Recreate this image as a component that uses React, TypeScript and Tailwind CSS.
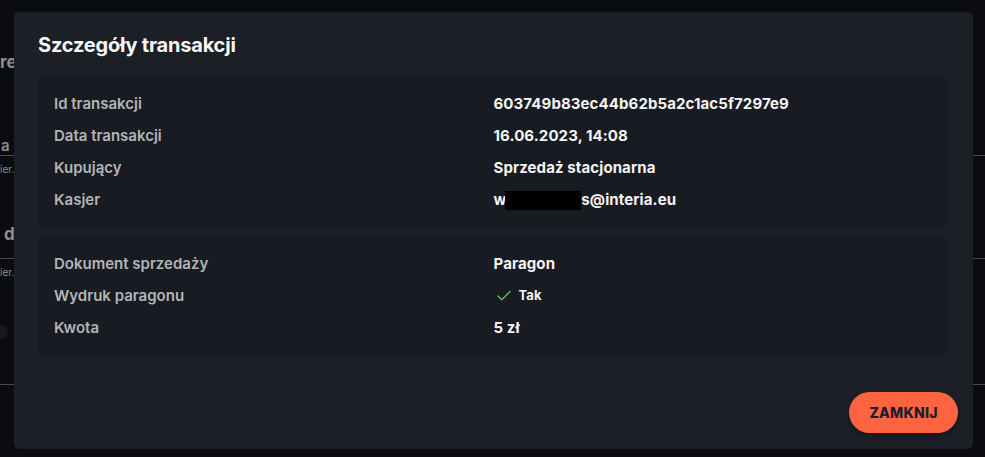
import React from "react";

const rows1 = [
  ["Id transakcji", "603749b83ec44b62b5a2c1ac5f7297e9"],
  ["Data transakcji", "16.06.2023, 14:08"],
  ["Kupujący", "Sprzedaż stacjonarna"],
];

function Row({ label, children }: { label: string; children: React.ReactNode }) {
  return (
    <div className="grid grid-cols-2 h-[32px] items-center">
      <div className="text-[15px] font-semibold text-[#b3b4b7]">{label}</div>
      <div className="text-[15px] font-bold text-[#f4f4f5] tracking-[0.1px] flex items-center">{children}</div>
    </div>
  );
}

export default function App() {
  return (
    <div
      className="relative w-[985px] h-[457px] overflow-hidden bg-[#0b0c0f]"
      style={{ fontFamily: "Inter, 'Noto Sans', sans-serif" }}
    >
      {/* background page */}
      <div className="flex flex-col text-[#8d8e91]">
        <div className="h-[52px]" />
        <div className="h-[20px] text-[17px] font-bold leading-[20px]">re</div>
        <div className="h-[64px]" />
        <div className="h-[19px] pl-[1px] text-[15px] font-semibold leading-[19px]">a</div>
        <div className="h-[1px] bg-[#4a4b4f]" />
        <div className="h-[14px] pt-[8px] text-[10px] leading-[10px]">ier.</div>
        <div className="h-[54px]" />
        <div className="h-[20px] pl-[4px] text-[17px] font-bold leading-[20px]">d</div>
        <div className="h-[1px] bg-[#4a4b4f] mt-[14px]" />
        <div className="h-[14px] pt-[8px] text-[10px] leading-[10px]">ier.</div>
        <div className="h-[52px]" />
        <div className="h-[14px] w-[8px] rounded-r-full bg-[#17181b]" />
        <div className="h-[45px]" />
        <div className="h-[1px] bg-[#4a4b4f]" />
      </div>

      {/* modal */}
      <div className="absolute left-[14px] top-[12px] w-[959px] h-[437px] rounded-[5px] bg-[#1c1f26] flex flex-col px-[24px] pt-[19px] pb-[16px]">
        <h2 className="text-[20px] leading-[28px] font-bold text-[#f7f7f8] tracking-[-0.2px]">Szczegóły transakcji</h2>

        <div className="mt-[17px] rounded-[6px] bg-[#181b21] px-[16px] py-[12px]">
          {rows1.map(([l, v]) => (
            <Row key={l} label={l}>
              {v}
            </Row>
          ))}
          <Row label="Kasjer">
            <span>w</span>
            <span className="inline-block w-[76px] h-[19px] bg-black -ml-[1px]" />
            <span>s@interia.eu</span>
          </Row>
        </div>

        <div className="mt-[8px] rounded-[6px] bg-[#181b21] px-[16px] py-[12px]">
          <Row label="Dokument sprzedaży">Paragon</Row>
          <Row label="Wydruk paragonu">
            <svg
              width="18"
              height="18"
              viewBox="0 0 24 24"
              fill="none"
              stroke="#5cb860"
              strokeWidth="2"
              strokeLinecap="round"
              strokeLinejoin="round"
              className="ml-[1px]"
            >
              <path d="M20 6 9 17l-5-5" />
            </svg>
            <span className="ml-[6px] text-[13px] font-bold">Tak</span>
          </Row>
          <Row label="Kwota">5 zł</Row>
        </div>

        <div className="mt-auto flex justify-end">
          <button className="h-[41px] w-[109px] -mr-[9px] rounded-full bg-[#ff6440] text-[#1c1f26] text-[14px] font-extrabold tracking-[0.2px] shadow-[0_2px_4px_rgba(0,0,0,0.35)]">
            ZAMKNIJ
          </button>
        </div>
      </div>
    </div>
  );
}
